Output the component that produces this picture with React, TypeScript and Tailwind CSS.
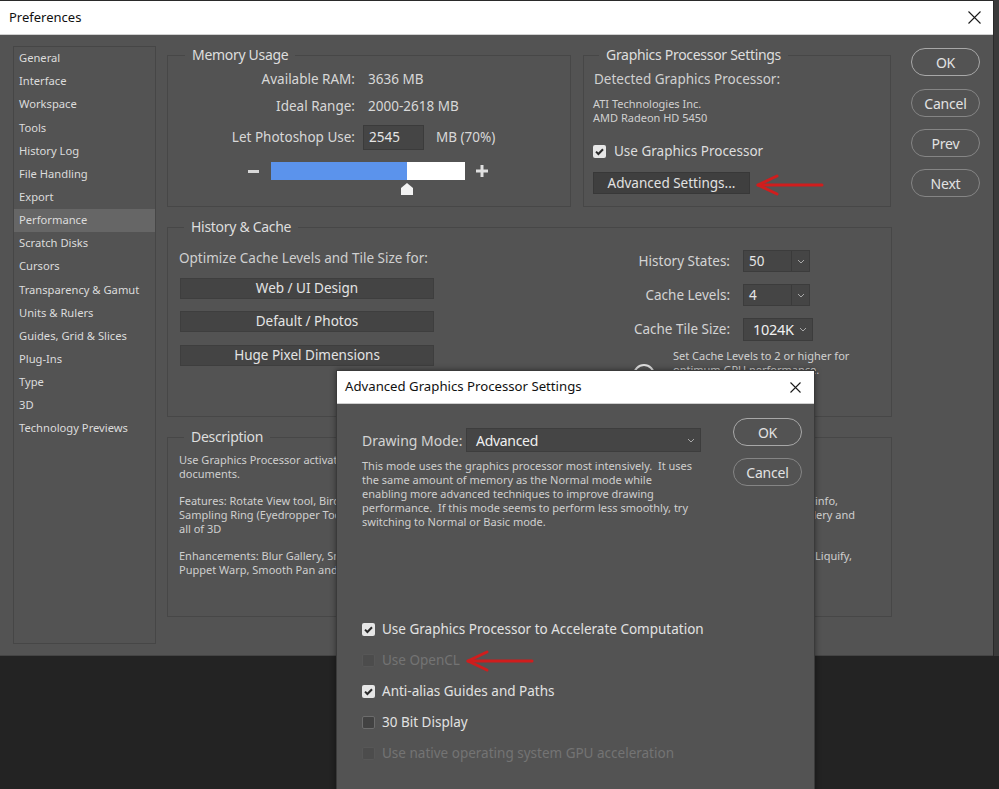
import React from "react";

type CS = "on" | "off" | "dis";

function Check({ state }: { state: CS }) {
  if (state === "on")
    return (
      <span className="w-[13px] h-[13px] rounded-[2px] bg-[#e6e6e6] flex items-center justify-center shrink-0">
        <svg width="11" height="11" viewBox="0 0 11 11">
          <path d="M2 5.6 L4.4 8 L9 3.2" fill="none" stroke="#2b2b2b" strokeWidth="2" />
        </svg>
      </span>
    );
  if (state === "off")
    return <span className="w-[13px] h-[13px] rounded-[2px] bg-[#424242] border border-[#6c6c6c] shrink-0" />;
  return <span className="w-[13px] h-[13px] rounded-[2px] bg-[#4c4c4c] border border-[#575757] shrink-0" />;
}

function Pill({ label, def }: { label: string; def?: boolean }) {
  return (
    <div
      className={`w-[69px] h-[28px] rounded-full border flex items-center justify-center text-[14px] tracking-[-0.2px] text-[#e2e2e2] ${
        def ? "border-[#a8a8a8]" : "border-[#858585]"
      }`}
    >
      {label}
    </div>
  );
}

function Chevron({ color = "#a8a8a8" }: { color?: string }) {
  return (
    <svg width="8" height="5" viewBox="0 0 8 5">
      <path d="M1 1 L4 4 L7 1" fill="none" stroke={color} strokeWidth="1" />
    </svg>
  );
}

function Arrow() {
  return (
    <svg width="70" height="26" viewBox="0 0 70 26">
      <path d="M3 13 L67 13" stroke="#d01d1d" strokeWidth="3" strokeLinecap="round" />
      <path d="M22 4 L3 13 L22 22" fill="none" stroke="#d01d1d" strokeWidth="3" strokeLinecap="round" strokeLinejoin="round" />
    </svg>
  );
}

function CloseX({ size }: { size: number }) {
  return (
    <svg width={size} height={size} viewBox={`0 0 ${size} ${size}`}>
      <path d={`M0.5 0.5 L${size - 0.5} ${size - 0.5} M${size - 0.5} 0.5 L0.5 ${size - 0.5}`} stroke="#1a1a1a" strokeWidth="1.1" />
    </svg>
  );
}

const sidebar = [
  "General",
  "Interface",
  "Workspace",
  "Tools",
  "History Log",
  "File Handling",
  "Export",
  "Performance",
  "Scratch Disks",
  "Cursors",
  "Transparency & Gamut",
  "Units & Rulers",
  "Guides, Grid & Slices",
  "Plug-Ins",
  "Type",
  "3D",
  "Technology Previews",
];

const legendCls = "px-[7px] text-[14px] tracking-[-0.3px] leading-[18px] text-[#dedede]";

export default function App() {
  return (
    <div className="w-[999px] h-[789px] bg-[#232323] relative overflow-hidden font-['Noto_Sans',sans-serif]">
      <div className="flex">
        {/* Main Preferences window */}
        <div className="w-[993px] h-[656px] flex flex-col border-t border-[#2a2a2a]">
          <div className="h-[34px] bg-white flex items-center justify-between pl-[9px] pr-[12px] border-b border-[#d0d0d0]">
            <span className="text-[13px] text-[#111]">Preferences</span>
            <CloseX size={13} />
          </div>
          <div className="flex-1 bg-[#535353] flex pt-[11px] pl-[13px] border-b border-[#444]">
            {/* Sidebar */}
            <div className="w-[143px] h-[598px] border border-[#464646] flex flex-col">
              {sidebar.map((s) => (
                <div
                  key={s}
                  className={`h-[23.15px] flex items-center pl-[5px] text-[11.2px] text-[#dcdcdc] ${
                    s === "Performance" ? "bg-[#666666]" : ""
                  }`}
                >
                  {s}
                </div>
              ))}
            </div>

            {/* Middle column */}
            <div className="ml-[11px] w-[725px] flex flex-col">
              <div className="flex">
                {/* Memory Usage */}
                <fieldset className="w-[404px] h-[161px] border border-[#474747]">
                  <legend className={`ml-[17px] ${legendCls}`}>Memory Usage</legend>
                  <div className="flex flex-col text-[13.5px] text-[#d8d8d8] whitespace-nowrap">
                    <div className="flex h-[20px] items-center mt-[5px]">
                      <span className="w-[187px] text-right">Available RAM:</span>
                      <span className="ml-[13px]">3636 MB</span>
                    </div>
                    <div className="flex h-[20px] items-center mt-[7px]">
                      <span className="w-[187px] text-right">Ideal Range:</span>
                      <span className="ml-[13px]">2000-2618 MB</span>
                    </div>
                    <div className="flex h-[25px] items-center mt-[9px]">
                      <span className="w-[187px] text-right">Let Photoshop Use:</span>
                      <div className="ml-[8px] w-[61px] h-[25px] bg-[#454545] border border-[#3b3b3b] flex items-center pl-[5px] text-[#e4e4e4]">
                        2545
                      </div>
                      <span className="ml-[12px]">MB (70%)</span>
                    </div>
                    <div className="flex items-start mt-[12px] pl-[80px]">
                      <div className="w-[11px] h-[3px] bg-[#d8d8d8] mt-[8px]" />
                      <div className="relative ml-[12px] w-[194px] h-[18px] bg-white">
                        <div className="w-[136px] h-[18px] bg-[#5b93ec]" />
                        <svg className="absolute left-[130px] top-[21px]" width="12" height="12" viewBox="0 0 12 12">
                          <path d="M6 0 L12 5 L12 12 L0 12 L0 5 Z" fill="#f2f2f2" />
                        </svg>
                      </div>
                      <svg className="ml-[11px] mt-[3px]" width="12" height="12" viewBox="0 0 12 12">
                        <path d="M6 0 V12 M0 6 H12" stroke="#e0e0e0" strokeWidth="3" />
                      </svg>
                    </div>
                  </div>
                </fieldset>

                {/* GPU settings */}
                <fieldset className="ml-[12px] w-[308px] h-[161px] border border-[#474747]">
                  <legend className={`ml-[15px] ${legendCls}`}>Graphics Processor Settings</legend>
                  <div className="flex flex-col pl-[9px]">
                    <div className="h-[20px] flex items-center mt-[5px] pl-[1px] text-[13.5px] text-[#d0d0d0]">
                      Detected Graphics Processor:
                    </div>
                    <div className="mt-[8px] text-[11px] leading-[14px] text-[#d0d0d0]">
                      <div>ATI Technologies Inc.</div>
                      <div>AMD Radeon HD 5450</div>
                    </div>
                    <div className="h-[20px] mt-[16px] flex items-center">
                      <Check state="on" />
                      <span className="ml-[8px] text-[13.5px] text-[#dedede]">Use Graphics Processor</span>
                    </div>
                    <div className="mt-[11px] w-[157px] h-[22px] bg-[#3f3f3f] border border-[#383838] flex items-center justify-center text-[13.5px] text-[#e2e2e2]">
                      Advanced Settings...
                    </div>
                  </div>
                </fieldset>
              </div>

              {/* History & Cache */}
              <fieldset className="mt-[11px] w-[725px] h-[199px] border border-[#474747]">
                <legend className={`ml-[16px] ${legendCls}`}>History &amp; Cache</legend>
                <div className="flex">
                  <div className="ml-[11px] w-[256px] flex flex-col">
                    <div className="h-[20px] mt-[12px] flex items-center text-[13.5px] text-[#d0d0d0] whitespace-nowrap">
                      Optimize Cache Levels and Tile Size for:
                    </div>
                    {["Web / UI Design", "Default / Photos", "Huge Pixel Dimensions"].map((b, i) => (
                      <div
                        key={b}
                        className={`ml-[1px] w-[254px] h-[21px] bg-[#444444] border border-[#3e3e3e] flex items-center justify-center text-[13.5px] text-[#e4e4e4] ${
                          i === 0 ? "mt-[10px]" : i === 1 ? "mt-[12px]" : "mt-[13px]"
                        }`}
                      >
                        {b}
                      </div>
                    ))}
                  </div>
                  <div className="ml-[165px] flex flex-col">
                    <div className="flex items-center h-[22px] mt-[14px]">
                      <span className="w-[130px] text-right text-[13.5px] text-[#d4d4d4]">History States:</span>
                      <div className="ml-[13px] w-[67px] h-[22px] bg-[#454545] border border-[#3c3c3c] flex">
                        <span className="w-[48px] border-r border-[#3a3a3a] pl-[5px] text-[13.5px] text-[#e6e6e6] leading-[20px]">50</span>
                        <span className="flex-1 flex items-center justify-center">
                          <Chevron />
                        </span>
                      </div>
                    </div>
                    <div className="flex items-center h-[22px] mt-[12px]">
                      <span className="w-[130px] text-right text-[13.5px] text-[#d4d4d4]">Cache Levels:</span>
                      <div className="ml-[13px] w-[67px] h-[22px] bg-[#454545] border border-[#3c3c3c] flex">
                        <span className="w-[48px] border-r border-[#3a3a3a] pl-[5px] text-[13.5px] text-[#e6e6e6] leading-[20px]">4</span>
                        <span className="flex-1 flex items-center justify-center">
                          <Chevron />
                        </span>
                      </div>
                    </div>
                    <div className="flex items-center h-[23px] mt-[12px]">
                      <span className="w-[130px] text-right text-[13.5px] text-[#d4d4d4]">Cache Tile Size:</span>
                      <div className="ml-[13px] w-[70px] h-[23px] bg-[#454545] border border-[#3c3c3c] flex items-center">
                        <span className="pl-[9px] text-[14.5px] tracking-[-0.3px] text-[#f0f0f0]">1024K</span>
                        <span className="ml-[5px]">
                          <Chevron />
                        </span>
                      </div>
                    </div>
                    <div className="flex items-start mt-[8px]">
                      <span className="ml-[33px] mt-[15px] w-[22px] h-[22px] rounded-full border-2 border-[#e0e0e0]" />
                      <div className="ml-[18px] text-[11px] leading-[14px] text-[#d0d0d0]">
                        <div>Set Cache Levels to 2 or higher for</div>
                        <div>optimum GPU performance.</div>
                      </div>
                    </div>
                  </div>
                </div>
              </fieldset>

              {/* Description */}
              <fieldset className="mt-[11px] w-[725px] h-[189px] border border-[#474747]">
                <legend className={`ml-[16px] ${legendCls}`}>Description</legend>
                <div className="pl-[11px] mt-[7px] text-[11px] leading-[14px] text-[#cfcfcf] whitespace-nowrap">
                  <div>Use Graphics Processor activates certain features and interface</div>
                  <div>documents.</div>
                  <div className="mt-[13px] flex w-[659px]">
                    <span>Features: Rotate View tool, Birds Eye Zooming, Pixel Grid, Flick</span>
                    <span className="ml-auto">HUD Color Picker and Rich Cursor info,</span>
                  </div>
                  <div className="flex w-[676px]">
                    <span>Sampling Ring (Eyedropper Tool), On-Canvas Brush Resizing,</span>
                    <span className="ml-auto">Lighting Effects Gallery, Blur Gallery and</span>
                  </div>
                  <div>all of 3D</div>
                  <div className="mt-[13px] flex w-[673px]">
                    <span>Enhancements: Blur Gallery, Smart Sharpen, Select Focus Area,</span>
                    <span className="ml-auto">Image Size - Preserve Details, Liquify,</span>
                  </div>
                  <div>Puppet Warp, Smooth Pan and Zoom, Drop Shadow for Canvas</div>
                </div>
              </fieldset>
            </div>

            {/* Right buttons */}
            <div className="ml-[19px] -mt-[11px] pt-[13px] flex flex-col">
              <Pill label="OK" def />
              <div className="mt-[13px]">
                <Pill label="Cancel" />
              </div>
              <div className="mt-[12px]">
                <Pill label="Prev" />
              </div>
              <div className="mt-[12px]">
                <Pill label="Next" />
              </div>
            </div>
          </div>
        </div>
        <div className="w-[6px] h-[656px] bg-[#3a3a3a] border-l border-[#2a2a2a]" />
      </div>

      {/* Advanced Graphics Processor Settings dialog */}
      <div className="absolute left-[336px] top-[370px] w-[479px] h-[430px] flex flex-col border border-[#3a3a3a] bg-[#535353] shadow-[0_0_6px_rgba(0,0,0,0.45)]">
        <div className="h-[33px] bg-white flex items-center justify-between pl-[8px] pr-[13px] border-b border-[#cfcfcf]">
          <span className="text-[13.2px] text-[#111]">Advanced Graphics Processor Settings</span>
          <CloseX size={11} />
        </div>
        <div className="flex pl-[25px]">
          <div className="w-[339px] flex flex-col">
            <div className="flex items-center mt-[24px] h-[24px]">
              <span className="w-[104px] text-[14px] text-[#d4d4d4] whitespace-nowrap">Drawing Mode:</span>
              <div className="w-[235px] h-[24px] bg-[#454545] border border-[#3d3d3d] flex items-center justify-between pl-[9px] pr-[5px]">
                <span className="text-[14px] tracking-[-0.3px] text-[#f0f0f0]">Advanced</span>
                <Chevron />
              </div>
            </div>
            <div className="mt-[7px] text-[11px] leading-[14px] text-[#cfcfcf] whitespace-pre">
              <div>This mode uses the graphics processor most intensively.  It uses</div>
              <div>the same amount of memory as the Normal mode while</div>
              <div>enabling more advanced techniques to improve drawing</div>
              <div>performance.  If this mode seems to perform less smoothly, try</div>
              <div>switching to Normal or Basic mode.</div>
            </div>
            <div className="mt-[85px] flex flex-col whitespace-nowrap">
              {[
                { t: "Use Graphics Processor to Accelerate Computation", s: "on" as CS },
                { t: "Use OpenCL", s: "dis" as CS },
                { t: "Anti-alias Guides and Paths", s: "on" as CS },
                { t: "30 Bit Display", s: "off" as CS },
                { t: "Use native operating system GPU acceleration", s: "dis" as CS },
              ].map((r) => (
                <div key={r.t} className="h-[31px] flex items-center">
                  <Check state={r.s} />
                  <span className={`ml-[7px] text-[13.5px] ${r.s === "dis" ? "text-[#747474]" : "text-[#e2e2e2]"}`}>{r.t}</span>
                </div>
              ))}
            </div>
          </div>
          <div className="ml-[32px] mt-[14px] flex flex-col">
            <Pill label="OK" def />
            <div className="mt-[12px]">
              <Pill label="Cancel" />
            </div>
          </div>
        </div>
      </div>

      {/* Red annotation arrows */}
      <div className="absolute left-[755px] top-[172px]">
        <Arrow />
      </div>
      <div className="absolute left-[465px] top-[648px]">
        <Arrow />
      </div>
    </div>
  );
}
